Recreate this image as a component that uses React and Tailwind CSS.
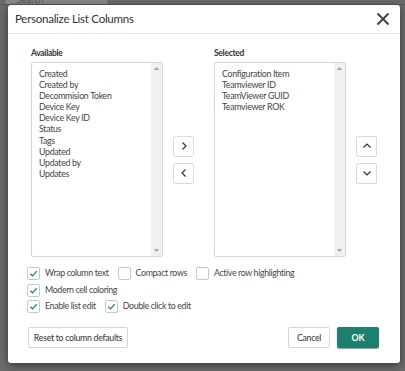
import React from "react";

const font = { fontFamily: "Lato, 'Open Sans', sans-serif" };

function Check({ checked, label }) {
  return (
    <div className="flex items-center gap-[5px]">
      <div className="w-[13px] h-[13px] border border-[#c8c8c8] rounded-[2px] bg-white flex items-center justify-center">
        {checked && (
          <svg width="9" height="9" viewBox="0 0 10 10">
            <path d="M1.5 5.2 L4 7.6 L8.6 2.4" fill="none" stroke="#1d7f6e" strokeWidth="1.4" />
          </svg>
        )}
      </div>
      <span className="text-[8.8px] tracking-[-0.35px] text-[#444] leading-none">{label}</span>
    </div>
  );
}

function ListBox({ items }) {
  return (
    <div className="w-[132px] h-[195px] border border-[#d6d6d6] rounded-[2px] flex bg-white">
      <div className="flex-1 pt-[5px] pl-[7px] flex flex-col">
        {items.map((t) => (
          <div key={t} className="text-[8.8px] tracking-[-0.3px] leading-[11.1px] text-[#444] whitespace-nowrap">{t}</div>
        ))}
      </div>
      <div className="w-[11px] bg-[#f1f1f1] flex flex-col justify-between items-center py-[4px]">
        <svg width="5" height="3" viewBox="0 0 5 3"><path d="M0 3 L2.5 0 L5 3Z" fill="#a3a3a3" /></svg>
        <svg width="5" height="3" viewBox="0 0 5 3"><path d="M0 0 L2.5 3 L5 0Z" fill="#a3a3a3" /></svg>
      </div>
    </div>
  );
}

function SmallBtn({ d }) {
  return (
    <div className="w-[21px] h-[21px] border border-[#dcdcdc] rounded-[2px] bg-white flex items-center justify-center">
      <svg width="10" height="10" viewBox="0 0 10 10">
        <path d={d} fill="none" stroke="#333" strokeWidth="1.2" />
      </svg>
    </div>
  );
}

export default function App() {
  return (
    <div className="w-[405px] h-[371px] bg-[#6b6b6b] relative overflow-hidden" style={font}>
      <div className="absolute left-[5px] top-0 w-[103px] h-[5px] bg-[#8a8a8a] border-x border-[#777] overflow-hidden">
        <div className="text-[9px] text-[#555] pl-[11px] leading-[9px] -mt-[5px]">Search</div>
      </div>
      <div className="absolute left-0 top-0 w-[405px] h-[5px] border-b border-[#5a5a5a]"></div>
      <div className="absolute left-[8px] top-[5px] w-[392px] h-[358px] bg-white rounded-[3px] shadow-[0_2px_8px_rgba(0,0,0,0.5)] flex flex-col">
        <div className="h-[29px] border-b border-[#e6e6e6] flex items-center justify-between pl-[7px] pr-[10px]">
          <span className="text-[11.6px] tracking-[-0.3px] text-[#333]">Personalize List Columns</span>
          <svg width="14" height="14" viewBox="0 0 14 14">
            <path d="M1.5 1.5 L12.5 12.5 M12.5 1.5 L1.5 12.5" stroke="#444" strokeWidth="2" />
          </svg>
        </div>
        <div className="flex pl-[23px] pt-[14px]">
          <div className="flex flex-col gap-[3px]">
            <span className="text-[8.5px] tracking-[-0.3px] font-bold text-[#333] leading-[11px]">Available</span>
            <ListBox items={["Created", "Created by", "Decommision Token", "Device Key", "Device Key ID", "Status", "Tags", "Updated", "Updated by", "Updates"]} />
          </div>
          <div className="flex flex-col justify-center gap-[6px] ml-[10px] mt-[14px]">
            <SmallBtn d="M3.5 1.5 L7 5 L3.5 8.5" />
            <SmallBtn d="M6.5 1.5 L3 5 L6.5 8.5" />
          </div>
          <div className="flex flex-col gap-[3px] ml-[20px]">
            <span className="text-[8.5px] tracking-[-0.3px] font-bold text-[#333] leading-[11px]">Selected</span>
            <ListBox items={["Configuration Item", "Teamviewer ID", "TeamViewer GUID", "Teamviewer ROK"]} />
          </div>
          <div className="flex flex-col justify-center gap-[6px] ml-[10px] mt-[14px]">
            <SmallBtn d="M1.5 6.5 L5 3 L8.5 6.5" />
            <SmallBtn d="M1.5 3.5 L5 7 L8.5 3.5" />
          </div>
        </div>
        <div className="flex flex-col gap-[3.5px] pl-[19px] mt-[10px]">
          <div className="flex items-center">
            <Check checked label="Wrap column text" />
            <div className="ml-[9px]"><Check label="Compact rows" /></div>
            <div className="ml-[9px]"><Check label="Active row highlighting" /></div>
          </div>
          <Check checked label="Modern cell coloring" />
          <div className="flex items-center">
            <Check checked label="Enable list edit" />
            <div className="ml-[9px]"><Check checked label="Double click to edit" /></div>
          </div>
        </div>
        <div className="flex items-center justify-between pl-[20px] pr-[21px] mt-[14px]">
          <div className="h-[21px] w-[100px] border border-[#d6d6d6] rounded-[2px] flex items-center justify-center text-[8.8px] tracking-[-0.3px] text-[#333]">
            Reset to column defaults
          </div>
          <div className="flex gap-[7px]">
            <div className="h-[21px] w-[42px] border border-[#d6d6d6] rounded-[2px] flex items-center justify-center text-[8.8px] tracking-[-0.3px] text-[#333]">
              Cancel
            </div>
            <div className="h-[21px] w-[42px] bg-[#1d7f6e] rounded-[2px] flex items-center justify-center text-[8.8px] font-bold text-white shadow-[0_1px_1px_rgba(0,0,0,0.4)]">
              OK
            </div>
          </div>
        </div>
      </div>
    </div>
  );
}
